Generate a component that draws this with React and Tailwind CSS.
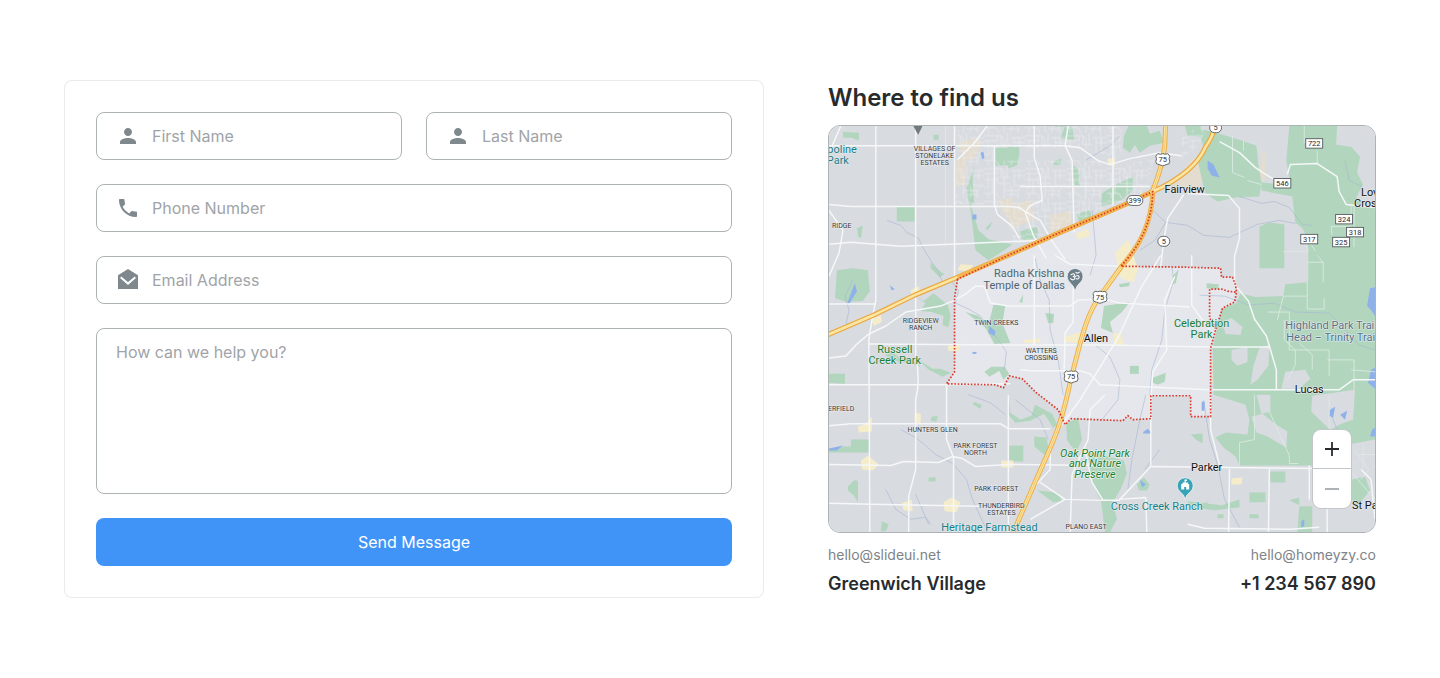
import { MdPerson, MdPhone } from "react-icons/md";

const PARKS = [
  // eastern parkland
  "M1198 128L1213 131L1240 139L1257 145L1259 165L1262 182L1260 196L1236 197L1218 201L1206 193L1202 178L1198 160L1204 146Z",
  "M1290 125H1338L1337 144L1352 146L1361 156L1358 172L1364 184L1357 197L1366 206H1376V533H1356L1352 480L1312 466H1240L1236 457L1224 448L1216 438L1226 433L1248 435L1250 420L1246 405L1214 395L1213 348L1222 309L1237 303L1241 293L1256 297L1284 296L1286 284L1309 282V240L1303 228L1296 222L1293 196L1262 190V182L1283 184L1290 178L1287 160Z",
  "M1260 226L1270 222L1285 224V268H1260Z",
  "M1309 236V222L1300 214L1316 210L1324 240Z",
  // north
  "M995 147H1019V156L1009 165H995Z",
  "M967 186L974 166L971 207L978 230L988 239L1012 244L1004 250L988 260L975 250L972 225Z",
  "M966 186L972 187L974 204L968 200Z",
  "M1102 193L1112 186L1133 176V190L1121 200L1101 206Z",
  "M1124 135L1129 125H1147L1150 133L1160 130L1164 142L1150 145L1140 152L1135 144L1130 152L1123 147Z",
  "M1046 125H1065L1060 138L1074 139L1072 126H1062Z",
  "M1008 146H1018V164L1008 168Z",
  "M1054 161L1061 158L1060 165L1053 164Z",
  "M1073 165L1078 168L1080 185H1073Z",
  "M1020 231L1037 226L1038 237L1027 241L1021 238Z",
  "M896 206H914V221H896Z",
  "M842 131L858 132V140L851 137H842Z",
  "M933 134H938V139H933Z",
  "M856 228L862 225L860 238L857 236Z",
  "M985 228L992 221L990 226L987 230Z",
  "M1077 214L1090 209L1092 220L1080 226Z",
  // west
  "M836 270L852 268L867 270L869 291L862 301L845 302L834 298Z",
  "M915 297L923 301L933 293L947 305L950 315L948 327L942 325L943 316L931 312L920 311L925 303Z",
  "M828 374H844V384L828 383Z",
  "M884 355L892 352L899 358L912 360L920 367L909 363L898 362Z",
  "M918 360L932 369L940 369L950 373L942 377L928 370Z",
  "M930 262L938 270L944 274L939 277L930 268Z",
  "M993 305H1005L1002 323L1010 343L994 344L985 328L965 312L978 316L988 325Z",
  "M984 372L991 367L1004 367L1009 374L1003 380L999 371L989 377Z",
  "M828 450L842 447H850V440H868V453H828Z",
  "M847 487L853 481H857V503L853 496L847 491Z",
  "M881 522L888 525L885 532H880Z",
  "M931 417L937 416L936 422L930 421Z",
  "M928 478H935V482H928Z",
  "M973 402L981 405L980 409L973 405Z",
  "M1008 393L1010 413L1020 420L1031 416L1035 405L1052 414L1057 425L1053 428L1044 414L1030 421L1015 423L1008 415Z",
  "M1008 446H1023V462H1008Z",
  "M1034 437L1046 438L1049 450L1045 456L1034 447Z",
  "M1037 491L1057 493L1062 502L1053 503Z",
  // center
  "M1104 306L1130 302L1122 312L1110 322L1113 333L1101 328Z",
  "M1130 366H1139V374H1130Z",
  "M1045 313L1054 314L1053 323L1048 323Z",
  "M1019 302L1023 294L1022 303Z",
  "M1119 284L1130 282L1129 286L1120 287Z",
  "M1153 378L1166 373L1165 382L1158 385L1153 383Z",
  "M1173 276L1179 269L1176 283L1173 284Z",
  "M1207 283L1219 284V289L1207 288Z",
  "M1066 424L1078 418L1082 440L1076 453L1067 441Z",
  "M1088 452L1124 461L1127 474L1121 489L1114 501L1100 500L1091 480Z",
  "M1101 501H1112L1117 520L1110 533H1105Z",
  "M1137 485L1144 478L1150 485L1147 491L1139 491Z",
  "M1185 125H1201V136L1188 135Z",
  "M1191 435L1203 434L1203 444L1196 440Z",
  "M1189 507L1208 503L1208 509L1190 510Z",
];

const GRAY_PATCHES = [
  "M1222 322L1232 318L1243 327L1241 335L1226 334Z",
  "M1232 350L1248 347V362L1238 366L1232 360Z",
  "M1260 348L1270 345L1269 366L1258 380L1251 385L1254 366Z",
  "M1286 372L1306 370L1311 379L1300 389H1282Z",
  "M1252 417L1263 414L1277 425L1288 432L1287 448L1268 437L1257 433Z",
  "M1313 396L1356 390L1354 420L1342 424L1331 430L1312 412Z",
  "M1257 395H1271V412L1262 414Z",
  "M1212 470H1345V492L1310 510L1295 525L1210 518Z",
  "M1349 445L1376 440V533H1356L1349 480Z",
];

const SMALL_PARKS =
  "M1271 472H1286V483H1271ZM1250 493H1266V503H1250ZM1300 507H1313V533H1298ZM1290 501L1300 498V506ZM1188 502L1222 506L1240 500V508L1215 511L1188 507ZM1250 515H1259V519H1250ZM1353 480L1366 477L1371 491L1359 506L1353 500ZM1218 515H1224V519H1218Z";

const SAND = [
  "M957 142L975 137L982 140L974 158L966 160L964 185H956V160L962 155Z",
  "M1010 206L1030 199L1035 220L1009 228Z",
  "M998 200L1013 197V226L1002 211Z",
  "M1190 160L1208 153L1210 164L1198 188L1172 187Z",
  "M1262 152H1266V180H1260Z",
  "M1049 215L1070 210L1072 227L1050 233Z",
  "M1212 359L1218 362V384H1211Z",
];

const YELLOW = [
  "M1115 253L1128 239L1138 268L1134 282L1121 278Z",
  "M1108 158H1115V166L1108 164Z",
  "M1076 233L1088 229L1090 236L1077 239Z",
  "M1064 337L1081 332L1080 343L1064 342Z",
  "M1114 334L1120 333L1125 347L1114 344Z",
  "M910 290L918 286L920 294L911 297Z",
  "M870 319L880 315L881 322L873 326Z",
  "M860 461L867 456L878 465L872 471L861 470Z",
  "M943 503L951 498L960 503L956 513L944 512Z",
  "M901 504L911 500L912 512L903 511Z",
  "M857 427L865 424L871 417V432L858 433Z",
  "M914 413L920 414V425L914 422Z",
  "M947 346L959 345V351H948Z",
  "M1024 340L1040 338V343H1024Z",
  "M960 264L973 265L968 271L957 270Z",
  "M1232 479L1243 478L1242 485H1232Z",
  "M1001 461H1013V468H1001Z",
];

const MAJOR_ROADS = [
  "M875 125V300Q870 325 868 340L869 533",
  "M915 125V356Q920 380 915 400V470L908 497V533",
  "M954 125V200",
  "M954 200V280",
  "M828 145H1065L1080 147L1098 160L1110 164L1130 158L1160 152L1182 155",
  "M828 204L850 206H1009L1020 207",
  "M828 244L850 242L900 246L950 244L1040 240",
  "M828 304H875",
  "M828 358L845 356L855 345L868 334L885 326L905 312L940 306L952 301L965 294L975 286L984 286",
  "M868 344L1010 345H1108L1210 347H1270",
  "M828 385H947L1010 384",
  "M828 426L850 424L1000 424L1008 429H1050",
  "M828 465L890 466L903 462L938 463L952 457L962 459L975 467L1008 465L1100 466",
  "M828 504L870 505L980 507",
  "M953 533V458L946 440V385",
  "M1008 395V533",
  "M994 145V204L997 214L1012 226L1019 238",
  "M987 125L974 142L957 159",
  "M1034 125V157L1040 176L1042 200L1030 205L1025 212L1033 235L1046 258",
  "M1068 125L1065 145L1072 160L1074 232",
  "M1113 125V205",
  "M1020 186H1150",
  "M1018 207L1040 220L1052 241L1065 259",
  "M1034 255V345",
  "M1055 255L1070 264L1120 266",
  "M984 286L990 303L1008 306H1070L1078 300L1105 299L1120 303L1190 307",
  "M1073 285V322L1065 333L1064 370",
  "M1020 370L1030 371H1080L1090 374L1100 385L1210 390H1340L1354 380H1376",
  "M1161 255L1141 288L1118 338L1080 400L1058 430L1048 450",
  "M1192 255V305L1210 330",
  "M1188 193L1229 195L1240 208V238L1235 256V284L1249 301L1255 319L1267 336L1277 370V390",
  "M1184 194L1168 218L1164 240L1161 266",
  "M1220 141L1240 152L1256 167L1265 173L1282 183",
  "M1288 174L1291 164L1318 163L1338 176L1340 191L1347 204L1376 207",
  "M1175 276L1165 300L1167 350L1153 372L1151 400V466",
  "M1211 395V430L1220 466",
  "M1105 395L1090 410L1088 440L1072 475L1070 533",
  "M1085 450L1092 483L1103 501H1119L1151 467L1320 469",
  "M1040 483L1065 500L1103 501",
  "M1036 485L1050 470V450",
  "M1030 520L1065 500",
  "M1119 500L1146 498L1147 533",
  "M1230 469L1229 533M1270 469L1269 533M1310 466V500M1328 500V533",
  "M1188 525L1205 529L1290 530L1320 528",
  "M840 125L829 150M828 210L842 230L838 253L828 276",
  "M1362 470L1372 480L1376 520",
];

const MINOR_ROADS = [
  "M1233 135V172L1245 177M1244 140V150M1248 180L1262 184",
  "M1318 163V150M1305 125V142H1316M1333 235L1332 226L1352 226V206M1355 206V247",
  "M1284 251H1309L1305 240M1316 251L1310 241",
  "M1308 262H1324L1318 255M1324 262V282",
  "M1308 282V296H1284L1278 320M1308 296V309H1325V298",
  "M1268 312H1290V350H1330V376",
  "M1255 395V440L1240 443V466M1270 412L1290 456V464H1299",
  "M1300 343L1313 355V370M1352 370L1376 372",
  "M1285 320V340L1296 350V365L1288 380M1328 360H1355V390",
  "M1350 470L1376 500M1330 395V430",
  "M1064 385V420M1135 385V395M1100 345V385M1100 310V340",
  "M1010 262H1050M1008 285H1034M1008 360L1024 372",
  "M945 125V245M1100 125L1102 150M1085 155V205",
  "M1355 450L1370 470L1362 480M1360 455H1376M1364 445V470",
];

const STREAMS = [
  "M886 220L900 225L906 232L918 238L922 247L930 260L937 270L942 282",
  "M948 278L958 290L955 303L970 310L980 316L990 330L998 340L1006 352L1004 370",
  "M1035 258L1040 280L1049 300L1050 330L1058 360L1063 395",
  "M1092 210L1094 230L1096 255L1090 275M1085 160L1110 145L1120 135",
  "M1172 266L1174 280L1165 310L1162 340L1152 370L1150 395",
  "M1150 207L1166 222L1188 225L1204 235L1230 237L1258 224L1280 220L1296 223",
  "M1240 196L1262 203L1275 201L1290 207L1303 224L1313 225",
  "M900 430L915 438L925 446L935 455L952 464L966 480L972 500L985 528",
  "M1146 395L1140 420L1132 460L1128 490M1160 450L1145 470",
  "M1095 345L1110 357L1120 380L1118 400L1102 420",
  "M1204 400L1210 440L1218 465L1225 500L1240 528",
  "M885 490L895 510L910 520L925 518L930 525M915 495L928 525",
  "M968 395L990 403L1005 415M1015 400L1040 420L1048 440",
  "M1200 295L1225 296L1250 305L1275 303L1296 312L1330 313L1360 345L1376 350",
  "M845 325L848 310L844 296L852 280M1166 222L1155 240L1140 250",
  "M1330 410L1340 435L1325 470M1346 160L1350 180L1363 186",
];

const WATER = [
  "M1208 160L1214 164L1220 177L1212 175L1208 168Z",
  "M1371 288L1376 287V316L1372 310L1368 306Z",
  "M1372 370L1376 368V389L1369 383Z",
  "M1331 410L1336 407L1334 418L1330 416Z",
  "M1341 415L1348 411L1346 420Z",
  "M850 293L854 283L856 291L849 303L846 304Z",
  "M972 214H976V219H972Z",
  "M889 285L894 289L891 290Z",
  "M972 352H976V354H972Z",
  "M989 326L995 331L994 336L988 333Z",
  "M1202 402H1205V411H1202Z",
  "M1144 432L1148 429L1152 434L1143 434Z",
  "M980 152L983 151L984 157L982 159Z",
  "M828 449L842 446L836 451H828Z",
  "M1302 522L1305 520V527L1302 528Z",
  "M1140 480L1146 485L1142 488Z",
  "M1373 430L1376 428V437H1371Z",
];

const US75 =
  "M1166 120L1165 145Q1163 165 1153 190C1152 222 1141 244 1121 267L1100 296C1085 316 1080 345 1071 378C1060 432 1052 443 1033 487L1013 533";
const TOLLWAY =
  "M824 336L873 315L914 295L957 277L1008 255L1060 232L1130 202L1153 191Q1195 172 1206 146Q1215 134 1216 120";
const ALLEN_BORDER =
  "M957 279L954 298V372L946 384L995 385L1003 388L1009 376L1022 379L1036 393L1058 410L1065 425L1071 419L1123 421L1128 416L1133 420L1151 419V396H1191V417H1211V348L1216 330L1223 308L1235 302L1237 292L1236 285L1233 277H1222L1221 268L1188 267L1121 266C1141 244 1152 222 1153 191L1130 202L1060 232L1008 255Z";

const AREA_LABELS = [
  [934, 150, "VILLAGES OF", "middle"],
  [934, 157, "STONELAKE", "middle"],
  [934, 164, "ESTATES", "middle"],
  [831, 228, "RIDGE", "start"],
  [920, 323, "RIDGEVIEW", "middle"],
  [920, 330, "RANCH", "middle"],
  [996, 325, "TWIN CREEKS", "middle"],
  [1041, 353, "WATTERS", "middle"],
  [1041, 360, "CROSSING", "middle"],
  [827, 411, "ERFIELD", "start"],
  [932, 432, "HUNTERS GLEN", "middle"],
  [975, 448, "PARK FOREST", "middle"],
  [975, 455, "NORTH", "middle"],
  [996, 492, "PARK FOREST", "middle"],
  [1001, 509, "THUNDERBIRD", "middle"],
  [1001, 516, "ESTATES", "middle"],
  [1086, 530, "PLANO EAST", "middle"],
];

const PLACE_LABELS = [
  [1185, 193, "Fairview", "middle", "#111"],
  [1096, 342, "Allen", "middle", "#111"],
  [1310, 393, "Lucas", "middle", "#111"],
  [1207, 472, "Parker", "middle", "#111"],
  [1362, 196, "Lovejoy", "start", "#111"],
  [1355, 207, "Crossing", "start", "#111"],
  [1353, 510, "St Paul", "start", "#111"],
  [856, 152, "poline", "end", "#187f8b"],
  [848, 163, "Park", "end", "#187f8b"],
  [1157, 511, "Cross Creek Ranch", "middle", "#15808c"],
  [989, 532, "Heritage Farmstead", "middle", "#15808c"],
  [1029, 277, "Radha Krishna", "middle", "#4f6374"],
  [1024, 289, "Temple of Dallas", "middle", "#4f6374"],
  [1286, 329, "Highland Park Trail", "start", "#567286"],
  [1287, 341, "Head – Trinity Trail", "start", "#567286"],
  [894, 353, "Russell", "middle", "#1c7f37"],
  [894, 364, "Creek Park", "middle", "#1c7f37"],
  [1202, 327, "Celebration", "middle", "#1c7f37"],
  [1202, 338, "Park", "middle", "#1c7f37"],
];

const PRESERVE_LABELS = [
  [1095, 457, "Oak Point Park"],
  [1095, 468, "and Nature"],
  [1095, 479, "Preserve"],
];

const SHIELDS = [
  [1163, 159, "75", 6],
  [1100, 297, "75", 6],
  [1071, 377, "75", 6],
  [1135, 200, "399", 8],
  [1164, 241, "5", 6],
  [1216, 127, "5", 6],
];

const ROUTE_SIGNS = [
  [1315, 143, "722"],
  [1283, 183, "546"],
  [1345, 219, "324"],
  [1356, 232, "318"],
  [1310, 239, "317"],
  [1342, 242, "325"],
];

function Shapes({ paths, ...rest }) {
  return (
    <g {...rest}>
      {paths.map((d) => (
        <path key={d} d={d} />
      ))}
    </g>
  );
}

function AreaMap() {
  return (
    <svg
      viewBox="828 125 548 408"
      preserveAspectRatio="xMidYMid slice"
      className="block h-full w-full"
      role="img"
      aria-label="Map of Allen, Texas"
    >
      <defs>
        <pattern
          id="streets"
          width="41"
          height="33"
          patternUnits="userSpaceOnUse"
        >
          <path
            d="M0 3H17L20 7V33M0 8H13V3M4 8V22H0M0 14H13M8 14V28M13 11V18H26M17 12H26M23 0V12M17 3V12M26 5H41M30 5V20H41M35 5V14M30 10H41M26 20Q30 26 26 33M20 25H34L38 20M34 25V33M0 28H12L15 33M4 28V33M23 29H34"
            fill="none"
            stroke="#edeff1"
            strokeWidth="0.6"
          />
        </pattern>
      </defs>
      <rect x="828" y="125" width="548" height="408" fill="#d8dbe0" />
      <path d={ALLEN_BORDER} fill="#e5e7ec" />
      <Shapes paths={SAND} fill="#e3dccf" />
      <Shapes paths={PARKS} fill="#b1d6bd" />
      <Shapes paths={GRAY_PATCHES} fill="#d8dbe0" />
      <path d={SMALL_PARKS} fill="#b1d6bd" />
      <Shapes paths={YELLOW} fill="#f5edca" />
      <path
        d="M957 149H994V160H1108L1149 190L1060 228L1015 246L1003 206L955 203ZM957 125H1122V160L1080 147H957ZM1118 165L1155 158L1148 185H1118ZM1182 130L1208 128L1198 145L1182 160Z"
        fill="url(#streets)"
      />
      <Shapes paths={STREAMS} fill="none" stroke="#a8b5d2" strokeWidth="0.6" />
      <Shapes paths={WATER} fill="#8fb1ea" />
      <Shapes paths={MINOR_ROADS} fill="none" stroke="#e0ebe6" strokeWidth="0.8" />
      <Shapes
        paths={MAJOR_ROADS}
        fill="none"
        stroke="#f5f7f8"
        strokeWidth="1.5"
        strokeLinejoin="round"
      />
      <g fill="none" strokeLinejoin="round">
        <path d={TOLLWAY} stroke="#eca63f" strokeWidth="5" />
        <path d={US75} stroke="#eeb04e" strokeWidth="5" />
        <path d={TOLLWAY} stroke="#fae6a3" strokeWidth="2.6" />
        <path d={US75} stroke="#fae6a3" strokeWidth="2.8" />
        <path d={US75} stroke="#efba5c" strokeWidth="0.7" />
        <path d="M957 277L1008 255L1060 232L1130 202L1150 192" stroke="#f3b54e" strokeWidth="4" />
        <path d="M1153 191C1152 222 1141 244 1121 267" stroke="#f5bd5c" strokeWidth="3.4" />
        <path
          d={ALLEN_BORDER + "M1236 292L1228 291L1222 289H1210V318L1216 328"}
          stroke="#d93a2b"
          strokeWidth="1.7"
          strokeDasharray="1.6 1.7"
        />
      </g>

      <g fontFamily="Roboto, sans-serif" paintOrder="stroke" strokeLinejoin="round">
        <g fontSize="7" fill="#33373b" stroke="#eceef1" strokeWidth="1">
          {AREA_LABELS.map(([x, y, label, anchor]) => (
            <text key={`${x}-${y}`} x={x} y={y} textAnchor={anchor}>
              {label}
            </text>
          ))}
        </g>
        <g fontSize="11" stroke="#e6ebec" strokeWidth="1.2">
          {PLACE_LABELS.map(([x, y, label, anchor, color]) => (
            <text key={label + y} x={x} y={y} textAnchor={anchor} fill={color}>
              {label}
            </text>
          ))}
        </g>
        <g fontSize="11" fontStyle="italic" fill="#1c7f37" stroke="#e8f1ea" strokeWidth="1.5">
          {PRESERVE_LABELS.map(([x, y, label]) => (
            <text key={label} x={x} y={y} textAnchor="middle">
              {label}
            </text>
          ))}
        </g>
      </g>

      <g fontFamily="Roboto, sans-serif" fontSize="7.5" textAnchor="middle" fill="#24282c">
        {SHIELDS.map(([x, y, label, half]) => (
          <g key={`${x}-${y}`}>
            {label === "75" ? (
              <path
                transform={`translate(${x} ${y})`}
                d="M-5 -6Q-2.5 -4.8 0 -6Q2.5 -4.8 5 -6L7 -3.5Q5.6 -1 7 2Q7 5 3.5 5L0 6.3L-3.5 5Q-7 5 -7 2Q-5.6 -1 -7 -3.5Z"
                fill="#fff"
                stroke="#55595d"
                strokeWidth="0.9"
              />
            ) : (
              <rect
                x={x - half}
                y={y - 5}
                width={half * 2}
                height="10"
                rx="5"
                fill="#fff"
                stroke="#55595d"
                strokeWidth="0.9"
              />
            )}
            <text x={x} y={y + 2.6}>
              {label}
            </text>
          </g>
        ))}
        {ROUTE_SIGNS.map(([x, y, label]) => (
          <g key={label}>
            <rect x={x - 8.5} y={y - 5} width="17" height="9.5" fill="#fff" stroke="#55595d" strokeWidth="0.9" />
            <text x={x} y={y + 2.5}>
              {label}
            </text>
          </g>
        ))}
      </g>

      <path d="M912.5 125H922L917.5 134Z" fill="#70797c" />
      <g>
        <path
          d="M1075 291Q1074 286 1070 282.5A8 8 0 1 1 1080 282.5Q1076 286 1075 291Z"
          fill="#6c7f89"
          stroke="#eef1f2"
          strokeWidth="0.8"
        />
        <path
          d="M1071 274.500Q1074 272.500 1074.500 275Q1074 276.500 1072.700 276.300Q1075.500 276.500 1074.500 279Q1072.500 280.500 1070.500 278.500M1075 276.800Q1077.500 274 1079 276.500Q1079 279.500 1076.300 278.500M1075.800 272.200Q1077.500 273.800 1079.300 272"
          fill="none"
          stroke="#fff"
          strokeWidth="1.1"
          strokeLinecap="round"
        />
      </g>
      <g>
        <path
          d="M1185.5 500Q1184.500 495 1180.500 492.500A8 8 0 1 1 1190.500 492.500Q1186.500 495 1185.500 500Z"
          fill="#36a3b7"
          stroke="#eef1f2"
          strokeWidth="0.8"
        />
        <path
          d="M1181.500 490V484.500H1182.800V483H1184.800V480H1187.300V481.500H1186V483H1188.200V484.500H1189.500V490H1186.500V487.500H1184.500V490Z"
          fill="#fff"
        />
      </g>
    </svg>
  );
}

function MailIcon() {
  return (
    <svg viewBox="0 0 24 24" className="size-6" aria-hidden="true">
      <path d="M12 1L22 7.200V21H2V7.200Z" fill="currentColor" />
      <path d="M4.700 9.300L12 15.600L19.300 9.300" fill="none" stroke="#fff" strokeWidth="2" />
    </svg>
  );
}

function Field({ id, type = "text", label, icon }) {
  return (
    <div className="flex h-12 items-center gap-3 rounded-lg border border-[#adb2b5] pr-4 pl-[19px] focus-within:border-[#4094f7]">
      <label htmlFor={id} className="shrink-0 text-[#7f888d]">
        {icon}
      </label>
      <input
        id={id}
        type={type}
        aria-label={label}
        placeholder={label}
        className="w-full min-w-0 bg-transparent text-base text-[#272b2e] outline-none placeholder:text-[#a0a4a8]"
      />
    </div>
  );
}

export default function App() {
  return (
    <main className="grid grid-cols-1 gap-16 bg-white px-6 py-20 font-[Inter,sans-serif] text-[#272b2e] md:grid-cols-[700fr_548fr] md:px-16">
      <form
        className="flex flex-col gap-6 rounded-lg p-8 ring-1 ring-[#e9ebec] ring-inset"
        onSubmit={(event) => event.preventDefault()}
      >
        <div className="grid grid-cols-2 gap-6">
          <Field id="first-name" label="First Name" icon={<MdPerson className="size-6" />} />
          <Field id="last-name" label="Last Name" icon={<MdPerson className="size-6" />} />
        </div>
        <Field id="phone" type="tel" label="Phone Number" icon={<MdPhone className="size-6" />} />
        <Field id="email" type="email" label="Email Address" icon={<MailIcon />} />
        <textarea
          id="message"
          aria-label="How can we help you?"
          placeholder="How can we help you?"
          className="h-[166px] w-full resize-none rounded-lg border border-[#adb2b5] px-[19px] py-[11px] text-base outline-none placeholder:text-[#a0a4a8] focus:border-[#4094f7]"
        />
        <button type="submit" className="h-12 rounded-lg bg-[#4094f7] text-base text-white">
          Send Message
        </button>
      </form>

      <section className="flex min-w-0 flex-col">
        <h2 className="pt-0.5 text-2xl leading-8 font-semibold">Where to find us</h2>
        <div className="relative mt-[11px] h-[408px] overflow-hidden rounded-xl border border-[#adb2b5]">
          <AreaMap />
          <div className="absolute right-6 bottom-6 flex w-[38px] flex-col divide-y divide-[#c4c7c9] overflow-hidden rounded-lg bg-white ring-1 ring-[#c4c7c9]">
            <button type="button" aria-label="Zoom in" className="flex h-[39px] items-center justify-center text-[#272b2e]">
              <svg viewBox="0 0 14 14" className="size-3.5" aria-hidden="true">
                <path d="M7 0V14M0 7H14" stroke="currentColor" strokeWidth="1.8" />
              </svg>
            </button>
            <button type="button" aria-label="Zoom out" className="flex h-[39px] items-center justify-center text-[#adb2b5]">
              <svg viewBox="0 0 14 14" className="size-3.5" aria-hidden="true">
                <path d="M0 7H14" stroke="currentColor" strokeWidth="1.8" />
              </svg>
            </button>
          </div>
        </div>
        <div className="mt-3 flex justify-between gap-4">
          <address className="not-italic">
            <a href="mailto:hello@slideui.net" className="block text-sm text-[#7d8488]">
              hello@slideui.net
            </a>
            <p className="mt-[5px] text-lg font-semibold">Greenwich Village</p>
          </address>
          <address className="text-right not-italic">
            <a href="mailto:hello@homeyzy.co" className="block text-sm text-[#7d8488]">
              hello@homeyzy.co
            </a>
            <a href="tel:+1234567890" className="mt-[5px] block text-lg font-semibold">
              +1 234 567 890
            </a>
          </address>
        </div>
      </section>
    </main>
  );
}
